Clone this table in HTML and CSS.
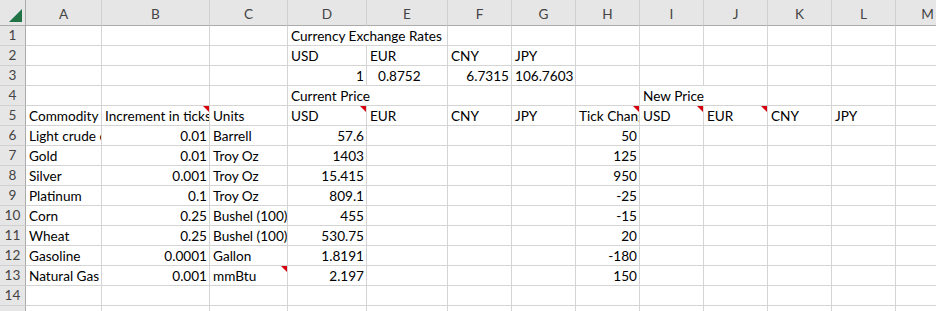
FILE: index.html
```html
<!DOCTYPE html>
<html>
<head>
<meta charset="utf-8">
<link rel="stylesheet" href="styles.css">
</head>
<body>
<div class="sheet">
  <div class="corner"><span class="tri"></span></div>
  <div class="ch">A</div><div class="ch">B</div><div class="ch">C</div><div class="ch">D</div><div class="ch">E</div><div class="ch">F</div><div class="ch">G</div><div class="ch">H</div><div class="ch">I</div><div class="ch">J</div><div class="ch">K</div><div class="ch">L</div><div class="ch">M</div>

  <div class="rh">1</div><div class="c"></div><div class="c"></div><div class="c"></div><div class="c span2">Currency Exchange Rates</div><div class="c"></div><div class="c"></div><div class="c"></div><div class="c"></div><div class="c"></div><div class="c"></div><div class="c"></div><div class="c"></div>

  <div class="rh">2</div><div class="c"></div><div class="c"></div><div class="c"></div><div class="c">USD</div><div class="c">EUR</div><div class="c">CNY</div><div class="c">JPY</div><div class="c"></div><div class="c"></div><div class="c"></div><div class="c"></div><div class="c"></div><div class="c"></div>

  <div class="rh">3</div><div class="c"></div><div class="c"></div><div class="c"></div><div class="c r">1</div><div class="c ind">0.8752</div><div class="c r">6.7315</div><div class="c r">106.7603</div><div class="c"></div><div class="c"></div><div class="c"></div><div class="c"></div><div class="c"></div><div class="c"></div>

  <div class="rh">4</div><div class="c"></div><div class="c"></div><div class="c"></div><div class="c span2">Current Price</div><div class="c"></div><div class="c"></div><div class="c"></div><div class="c span2">New Price</div><div class="c"></div><div class="c"></div><div class="c"></div>

  <div class="rh">5</div><div class="c">Commodity</div><div class="c cm">Increment in ticks</div><div class="c">Units</div><div class="c cm">USD</div><div class="c">EUR</div><div class="c">CNY</div><div class="c">JPY</div><div class="c cm">Tick Change</div><div class="c cm">USD</div><div class="c cm">EUR</div><div class="c">CNY</div><div class="c">JPY</div><div class="c"></div>

  <div class="rh">6</div><div class="c">Light crude oil</div><div class="c r">0.01</div><div class="c">Barrell</div><div class="c r">57.6</div><div class="c"></div><div class="c"></div><div class="c"></div><div class="c r">50</div><div class="c"></div><div class="c"></div><div class="c"></div><div class="c"></div><div class="c"></div>

  <div class="rh">7</div><div class="c">Gold</div><div class="c r">0.01</div><div class="c">Troy Oz</div><div class="c r">1403</div><div class="c"></div><div class="c"></div><div class="c"></div><div class="c r">125</div><div class="c"></div><div class="c"></div><div class="c"></div><div class="c"></div><div class="c"></div>

  <div class="rh">8</div><div class="c">Silver</div><div class="c r">0.001</div><div class="c">Troy Oz</div><div class="c r">15.415</div><div class="c"></div><div class="c"></div><div class="c"></div><div class="c r">950</div><div class="c"></div><div class="c"></div><div class="c"></div><div class="c"></div><div class="c"></div>

  <div class="rh">9</div><div class="c">Platinum</div><div class="c r">0.1</div><div class="c">Troy Oz</div><div class="c r">809.1</div><div class="c"></div><div class="c"></div><div class="c"></div><div class="c r">-25</div><div class="c"></div><div class="c"></div><div class="c"></div><div class="c"></div><div class="c"></div>

  <div class="rh">10</div><div class="c">Corn</div><div class="c r">0.25</div><div class="c">Bushel (100)</div><div class="c r">455</div><div class="c"></div><div class="c"></div><div class="c"></div><div class="c r">-15</div><div class="c"></div><div class="c"></div><div class="c"></div><div class="c"></div><div class="c"></div>

  <div class="rh">11</div><div class="c">Wheat</div><div class="c r">0.25</div><div class="c">Bushel (100)</div><div class="c r">530.75</div><div class="c"></div><div class="c"></div><div class="c"></div><div class="c r">20</div><div class="c"></div><div class="c"></div><div class="c"></div><div class="c"></div><div class="c"></div>

  <div class="rh">12</div><div class="c">Gasoline</div><div class="c r">0.0001</div><div class="c">Gallon</div><div class="c r">1.8191</div><div class="c"></div><div class="c"></div><div class="c"></div><div class="c r">-180</div><div class="c"></div><div class="c"></div><div class="c"></div><div class="c"></div><div class="c"></div>

  <div class="rh">13</div><div class="c">Natural Gas</div><div class="c r">0.001</div><div class="c cm">mmBtu</div><div class="c r">2.197</div><div class="c"></div><div class="c"></div><div class="c"></div><div class="c r">150</div><div class="c"></div><div class="c"></div><div class="c"></div><div class="c"></div><div class="c"></div>

  <div class="rh">14</div><div class="c"></div><div class="c"></div><div class="c"></div><div class="c"></div><div class="c"></div><div class="c"></div><div class="c"></div><div class="c"></div><div class="c"></div><div class="c"></div><div class="c"></div><div class="c"></div><div class="c"></div>

  <div class="rh"></div><div class="c"></div><div class="c"></div><div class="c"></div><div class="c"></div><div class="c"></div><div class="c"></div><div class="c"></div><div class="c"></div><div class="c"></div><div class="c"></div><div class="c"></div><div class="c"></div><div class="c"></div>
</div>
</body>
</html>
```
FILE: styles.css
```css
html, body {
  margin: 0;
  padding: 0;
  background: #ffffff;
  overflow: hidden;
  width: 936px;
  height: 311px;
}
.sheet {
  display: grid;
  grid-template-columns: 26px 76px 108px 78px 79px 81px 64px 64px 64px 64px 64px 64px 64px 64px;
  grid-template-rows: 26px repeat(15, 20px);
  font-family: Lato, "Liberation Sans", sans-serif;
  font-size: 13.6px;
  color: #000;
  width: max-content;
}
.corner {
  background: #e6e6e6;
  border-right: 1px solid #ababab;
  border-bottom: 1px solid #ababab;
  box-sizing: border-box;
  position: relative;
}
.tri {
  position: absolute;
  right: 3px;
  bottom: 3px;
  width: 0;
  height: 0;
  border-style: solid;
  border-width: 0 0 13px 13px;
  border-color: transparent transparent #217346 transparent;
}
.ch {
  background: #e6e6e6;
  border-right: 1px solid #d0d0d0;
  border-bottom: 1px solid #ababab;
  box-sizing: border-box;
  display: flex;
  align-items: center;
  justify-content: center;
  color: #444;
  padding-top: 2px;
}
.rh {
  background: #e6e6e6;
  border-right: 1px solid #ababab;
  border-bottom: 1px solid #d0d0d0;
  box-sizing: border-box;
  display: flex;
  align-items: flex-end;
  justify-content: center;
  color: #444;
  line-height: 18px;
  padding-bottom: 1px;
}
.c {
  border-right: 1px solid #d4d4d4;
  border-bottom: 1px solid #d4d4d4;
  box-sizing: border-box;
  white-space: nowrap;
  overflow: hidden;
  line-height: 18px;
  padding: 1px 2px 0 3px;
  position: relative;
}
.span2 {
  grid-column: span 2;
  overflow: visible;
}
.r {
  text-align: right;
}
.ind {
  padding-left: 11px;
}
.cm::after {
  content: "";
  position: absolute;
  top: 0;
  right: 0;
  width: 0;
  height: 0;
  border-style: solid;
  border-width: 0 6px 6px 0;
  border-color: transparent #d9000d transparent transparent;
}
```
